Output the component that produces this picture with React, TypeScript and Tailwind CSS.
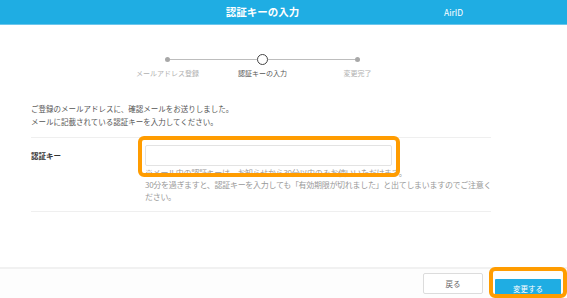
import React from "react";

const font = { fontFamily: '"Noto Sans CJK JP", "Noto Sans", sans-serif' };

const steps = [
  { label: "メールアドレス登録", active: false },
  { label: "認証キーの入力", active: true },
  { label: "変更完了", active: false },
];

export default function App() {
  return (
    <div className="flex h-[298px] w-[567px] flex-col overflow-hidden bg-white" style={font}>
      {/* Header */}
      <header className="relative flex h-[25px] shrink-0 items-center justify-center border-b border-[#6cc6ec] bg-[#1fade3]">
        <h1 className="ml-[-42px] text-[10.5px] font-bold leading-none text-white">認証キーの入力</h1>
        <span className="absolute left-[444px] top-[8px] text-[8.5px] leading-none text-white">AirID</span>
      </header>

      {/* Stepper */}
      <div className="ml-[120px] mt-[28px] grid w-[285px] grid-cols-3">
        {steps.map((s, i) => (
          <div key={s.label} className="flex flex-col items-center">
            <div className="flex h-[12px] w-full items-center">
              <div className={`h-px flex-1 ${i === 0 ? "bg-transparent" : "bg-[#bdbdbd]"}`} />
              {s.active ? (
                <div className="h-[11px] w-[11px] rounded-full border-[1.5px] border-[#444] bg-white" />
              ) : (
                <div className="h-[5px] w-[5px] rounded-full bg-[#a8a8a8]" />
              )}
              <div className={`h-px flex-1 ${i === 2 ? "bg-transparent" : "bg-[#bdbdbd]"}`} />
            </div>
            <span
              className={`mt-[3px] text-[7px] leading-[10px] ${s.active ? "text-[#555]" : "text-[#b0b0b0]"}`}
            >
              {s.label}
            </span>
          </div>
        ))}
      </div>

      {/* Content */}
      <div className="ml-[31px] w-[460px]">
        <p className="mt-[24px] text-[7.5px] leading-[13px] text-[#555]">
          ご登録のメールアドレスに、確認メールをお送りしました。
          <br />
          メールに記載されている認証キーを入力してください。
        </p>

        <div className="mt-[9px] flex border-y border-[#efefef] pb-[8px] pt-[7px]">
          <div className="w-[114px] pt-[6px] text-[7.5px] font-bold leading-[10px] text-[#333]">認証キー</div>
          <div className="w-[346px]">
            <div className="relative">
              <input
                className="block h-[21px] w-[247px] rounded-[2px] border border-[#e3e3e3] bg-white outline-none"
                type="text"
              />
              <div className="absolute left-[-7px] top-[-9px] h-[41px] w-[262px] rounded-[6px] border-[4px] border-[#ff9c00]" />
            </div>
            <p className="mt-[1px] w-[350px] text-[8px] leading-[12px] tracking-[-0.3px] text-[#999]">
              ※メール内の認証キーは、お知らせから30分以内のみお使いいただけます。
              <br />
              30分を過ぎますと、認証キーを入力しても「有効期限が切れました」と出てしまいますのでご注意ください。
            </p>
          </div>
        </div>
      </div>

      {/* Footer */}
      <footer className="mt-auto flex h-[31px] shrink-0 items-start justify-end gap-[12px] border-t-2 border-[#f1f1f1] bg-[#fdfdfd] pr-[6px] pt-[4px]">
        <button className="h-[21px] w-[60px] rounded-[2px] border border-[#dcdcdc] bg-white text-[7.5px] text-[#666]">
          戻る
        </button>
        <div className="relative">
          <button className="mt-[1px] h-[19px] w-[66px] rounded-[1px] bg-[#1fade3] text-[7.5px] text-white">
            変更する
          </button>
          <div className="absolute left-[-6px] top-[-6px] h-[31px] w-[78px] rounded-[6px] border-[4px] border-[#ff9c00]" />
        </div>
      </footer>
    </div>
  );
}
